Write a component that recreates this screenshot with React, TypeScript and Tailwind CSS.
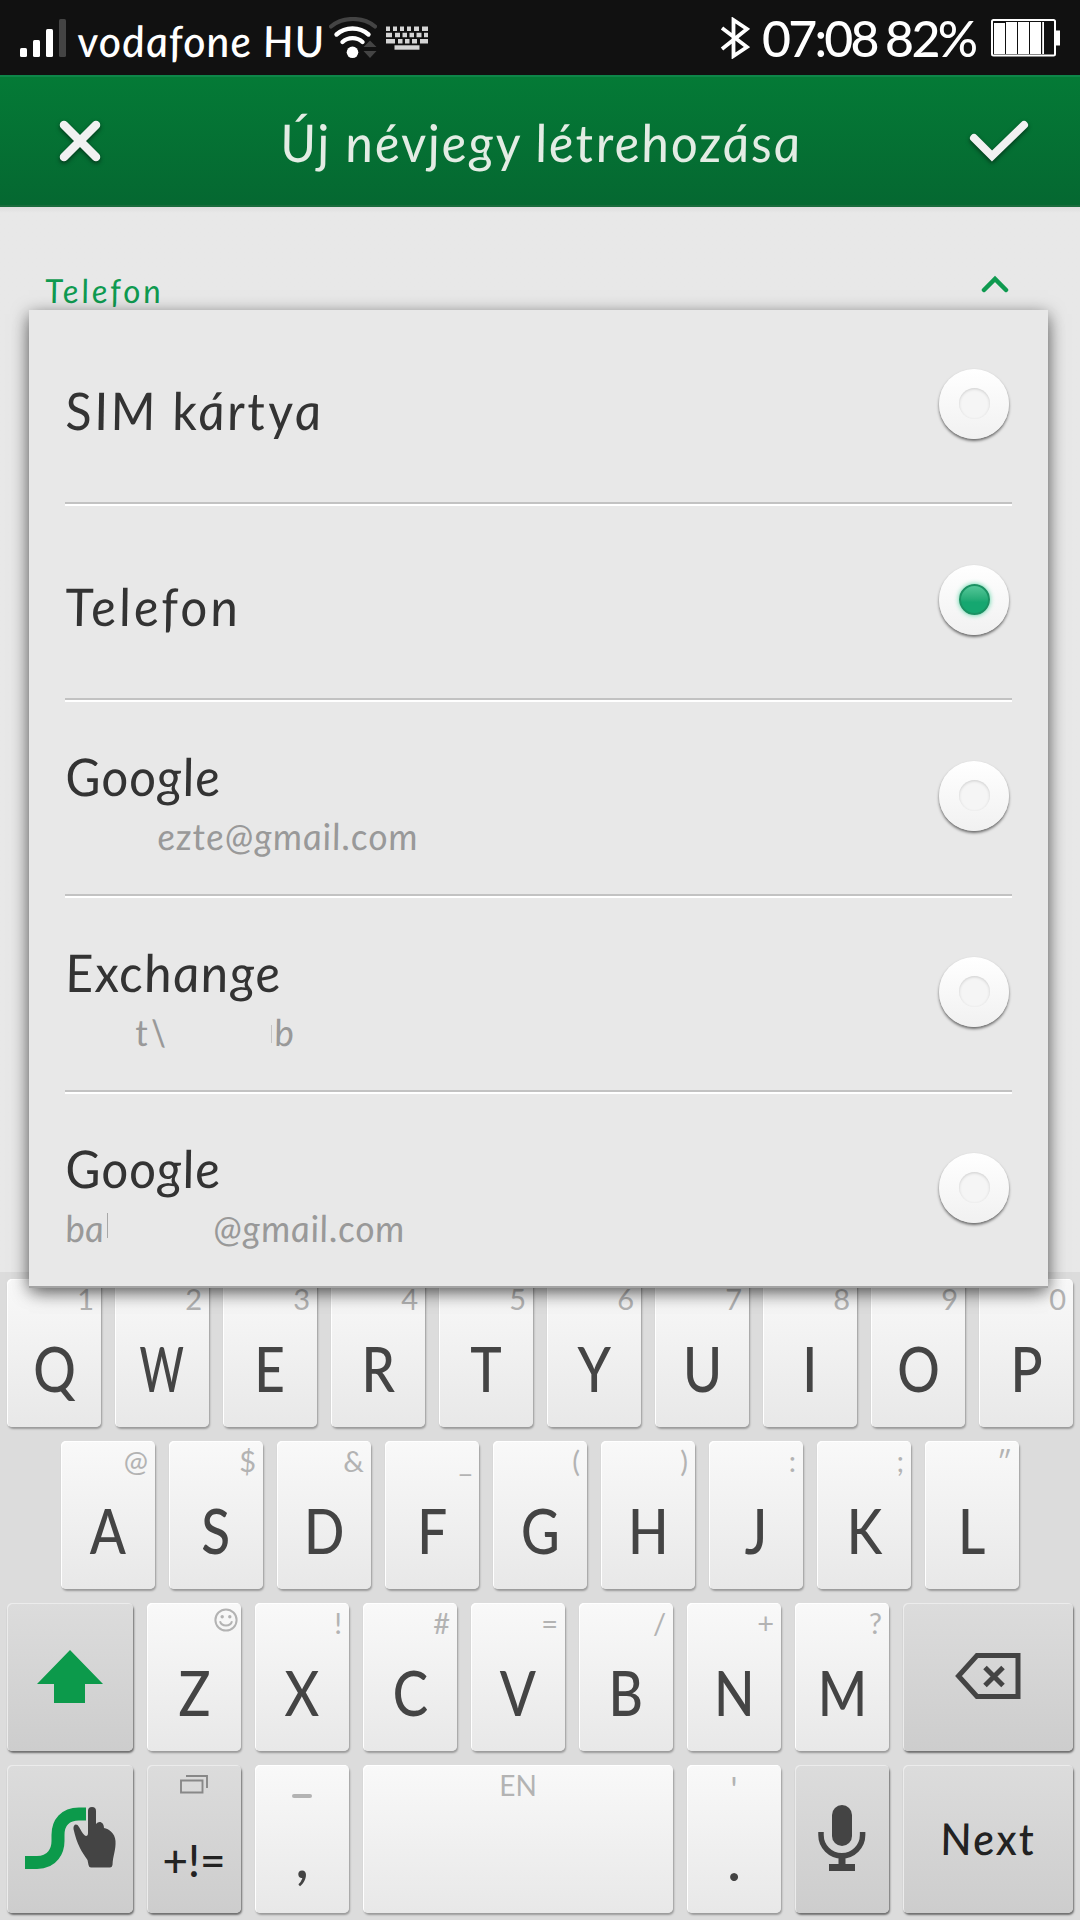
import type { ReactNode } from 'react'

type Account = {
  name: string
  tracking: string
  detail?: ReactNode
  selected?: boolean
}

type LetterKey = {
  letter: string
  hint: ReactNode
}

function Hand({ children, className = '' }: { children: ReactNode; className?: string }) {
  return <span className={`inline-block whitespace-pre italic skew-x-[6deg] ${className}`}>{children}</span>
}

const accounts: Account[] = [
  { name: 'SIM kártya', tracking: 'tracking-[2.4px]' },
  { name: 'Telefon', tracking: 'tracking-[3px]', selected: true },
  {
    name: 'Google',
    tracking: 'tracking-[0.8px]',
    detail: <Hand className="ml-[92px] tracking-[0.9px]">ezte@gmail.com</Hand>,
  },
  {
    name: 'Exchange',
    tracking: 'tracking-[1.3px]',
    detail: (
      <>
        <Hand className="ml-[70px] w-[32px] tracking-[3px]">t\</Hand>
        <span className="ml-[104px] mt-[14px] h-[18px] w-px bg-[#c4c4c4]" />
        <Hand className="ml-[2px]">b</Hand>
      </>
    ),
  },
  {
    name: 'Google',
    tracking: 'tracking-[0.8px]',
    detail: (
      <>
        <Hand className="w-[38px]">ba</Hand>
        <span className="ml-[4px] mt-[6px] h-[25px] w-px bg-[#a8a8a8]" />
        <Hand className="ml-[105px] tracking-[0.7px]">@gmail.com</Hand>
      </>
    ),
  },
]

const topRow: LetterKey[] = [
  { letter: 'Q', hint: '1' },
  { letter: 'W', hint: '2' },
  { letter: 'E', hint: '3' },
  { letter: 'R', hint: '4' },
  { letter: 'T', hint: '5' },
  { letter: 'Y', hint: '6' },
  { letter: 'U', hint: '7' },
  { letter: 'I', hint: '8' },
  { letter: 'O', hint: '9' },
  { letter: 'P', hint: '0' },
]

const homeRow: LetterKey[] = [
  { letter: 'A', hint: '@' },
  { letter: 'S', hint: '$' },
  { letter: 'D', hint: '&' },
  { letter: 'F', hint: '_' },
  { letter: 'G', hint: '(' },
  { letter: 'H', hint: ')' },
  { letter: 'J', hint: ':' },
  { letter: 'K', hint: ';' },
  { letter: 'L', hint: '″' },
]

const bottomRow: LetterKey[] = [
  { letter: 'Z', hint: <SmileIcon /> },
  { letter: 'X', hint: '!' },
  { letter: 'C', hint: '#' },
  { letter: 'V', hint: '=' },
  { letter: 'B', hint: '/' },
  { letter: 'N', hint: '+' },
  { letter: 'M', hint: '?' },
]

function SmileIcon() {
  return (
    <svg viewBox="0 0 24 24" className="-mr-[4px] -mt-[6px] h-6 w-6" fill="none" aria-hidden="true">
      <circle cx="12" cy="12" r="10.6" stroke="currentColor" strokeWidth="2" />
      <circle cx="8.2" cy="8.8" r="1.7" fill="currentColor" />
      <circle cx="15.8" cy="8.8" r="1.7" fill="currentColor" />
      <path d="M6 13.2C7.5 18.8 16.5 18.8 18 13.2" stroke="currentColor" strokeWidth="2" />
    </svg>
  )
}

function SignalIcon() {
  return (
    <svg viewBox="0 0 46 38" className="ml-5 h-[38px] w-[46px]" aria-hidden="true">
      <rect x="0" y="29" width="7" height="9" rx="1.5" fill="#fff" />
      <rect x="13" y="21" width="7" height="17" rx="1.5" fill="#fff" />
      <rect x="26" y="10" width="7" height="28" rx="1.5" fill="#fff" />
      <rect x="39" y="0" width="7" height="38" rx="1.5" fill="#444" />
    </svg>
  )
}

function WifiIcon() {
  return (
    <svg viewBox="0 0 48 42" className="h-[42px] w-12" fill="none" aria-hidden="true">
      <path d="M2 9.5C14 -0.5 34 -0.5 46 9.5" stroke="#444" strokeWidth="4.2" strokeLinecap="round" />
      <path d="M7.5 17.5C16.5 9.5 30.5 9.5 39.5 17.5" stroke="#fff" strokeWidth="4.4" strokeLinecap="round" />
      <path d="M13.5 25C19 19.8 28 19.8 33.5 25" stroke="#fff" strokeWidth="4.4" strokeLinecap="round" />
      <circle cx="23.5" cy="35.3" r="5.8" fill="#fff" />
      <path d="M34.5 30L41 23.5L47.5 30ZM34.5 34L41 41L47.5 34Z" fill="#444" />
    </svg>
  )
}

function KeyboardIcon() {
  return (
    <svg viewBox="0 0 44 24" className="ml-[8px] h-6 w-11" fill="none" stroke="#d4d4d4" strokeWidth="4.4" aria-hidden="true">
      <path d="M1 2.8H5M8 2.8H12M15 2.8H19M22 2.8H26M29 2.8H34M37 2.8H43" />
      <path d="M1 9H7M10 9H15M17.5 9H22M24.5 9H29M31.5 9H36.5M39 9H43" />
      <path d="M1 15.2H10M13 15.2H17.5M20 15.2H24.5M27 15.2H32M35 15.2H43" />
      <path d="M9.5 21.5H34.5" />
    </svg>
  )
}

function BluetoothIcon() {
  return (
    <svg viewBox="0 0 30 42" className="h-[42px] w-[30px]" fill="none" aria-hidden="true">
      <path d="M2 11L27 30L13.5 39V3L27 12L2 32" stroke="#fff" strokeWidth="3.8" />
    </svg>
  )
}

function BatteryIcon() {
  return (
    <svg viewBox="0 0 70 38" className="ml-[15px] mr-[19px] h-[38px] w-[70px]" aria-hidden="true">
      <rect x="1" y="1" width="63" height="35.5" rx="1.5" fill="none" stroke="#fff" strokeWidth="2" />
      <path d="M65 11.5H69V26.5H65Z" fill="#fff" />
      <path d="M3 4H14V35H3ZM15 3H26V35H15ZM27 3H38V35H27ZM39 3H50V35H39ZM51.2 3H53V35H51.2Z" fill="#fff" />
    </svg>
  )
}

function StatusBar() {
  return (
    <div className="flex h-[75px] items-center justify-between bg-[#111] text-white">
      <div className="flex items-center">
        <SignalIcon />
        <Hand className="ml-[11px] mt-[5px] w-[252px] text-[43px] font-medium leading-none tracking-[1px]">vodafone HU</Hand>
        <WifiIcon />
        <KeyboardIcon />
      </div>
      <div className="flex items-center">
        <BluetoothIcon />
        <span className="ml-[12px] w-[112px] text-[50px] font-medium leading-none tracking-[-2.8px]">07:08</span>
        <span className="ml-[11px] w-[91px] text-[50px] font-medium leading-none tracking-[-2.6px]">82%</span>
        <BatteryIcon />
      </div>
    </div>
  )
}

function Header() {
  return (
    <header className="flex h-[132px] items-center justify-between border-t-2 border-b-2 border-t-[#0e8649] border-b-[#1a6b3c] bg-linear-to-b from-[#047a36] to-[#056831]">
      <svg viewBox="0 0 44 44" className="ml-[58px] h-11 w-11 drop-shadow-[0_2px_2px_rgba(0,0,0,0.5)]" fill="none" aria-hidden="true">
        <path d="M6 6L38 38M38 6L6 38" stroke="#f1f1f1" strokeWidth="8.5" strokeLinecap="round" />
      </svg>
      <h1 className="ml-[10px] mt-[1px] text-[52px] leading-none text-[#e3ece4]">
        <Hand className="tracking-[1.9px]">Új névjegy létrehozása</Hand>
      </h1>
      <svg viewBox="0 0 60 44" className="mr-[51px] h-11 w-[60px] drop-shadow-[0_2px_2px_rgba(0,0,0,0.5)]" fill="none" aria-hidden="true">
        <path d="M5 19L23 37L55 6" stroke="#f1f1f1" strokeWidth="8" strokeLinecap="round" />
      </svg>
    </header>
  )
}

function Radio({ selected }: { selected?: boolean }) {
  return (
    <span className="flex h-[70px] w-[70px] items-center justify-center rounded-full bg-linear-to-b from-white to-[#f1f1f1] shadow-[0_2px_3px_rgba(0,0,0,0.55)]">
      {selected ? (
        <span className="-mt-[1px] h-[31px] w-[31px] rounded-full border-2 border-[#1b9263] bg-linear-to-b from-[#52c799] to-[#15a770] to-60% shadow-[0_0_5px_#4fd3a0]" />
      ) : (
        <span className="-mt-[1px] h-[31px] w-[31px] rounded-full bg-[#f5f5f5] shadow-[inset_0_1px_3px_rgba(0,0,0,0.16)]" />
      )}
    </span>
  )
}

function AccountMenu() {
  return (
    <ul className="absolute left-[29px] top-[310px] h-[976px] w-[1019px] bg-[#e8e8e8] pl-9 pr-9 shadow-[0_2px_0_#a3a3a3,0_4px_16px_rgba(0,0,0,0.5),0_10px_18px_-4px_rgba(0,0,0,0.35)]">
      {accounts.map((account, index) => (
        <li
          key={index}
          className="flex h-[196px] items-center justify-between border-b-2 border-white pb-[2px] shadow-[inset_0_-2px_0_#c2c2c2] last:border-transparent last:shadow-none"
        >
          <div className={account.detail ? 'flex flex-col pt-[5px]' : 'flex flex-col pt-[8px]'}>
            <Hand className={`self-start text-[52px] leading-[60px] text-[#333] ${account.tracking}`}>{account.name}</Hand>
            {account.detail && (
              <div className="flex h-[50px] items-start pt-[9px] text-[37px] leading-[42px] text-[#999]">{account.detail}</div>
            )}
          </div>
          <span className="mb-[5px] mr-[3px]">
            <Radio selected={account.selected} />
          </span>
        </li>
      ))}
    </ul>
  )
}

function Key({ children, dark, className = 'w-[94px]' }: { children?: ReactNode; dark?: boolean; className?: string }) {
  const tone = dark
    ? 'from-[#dcdcdc] to-[#cdcdcd] shadow-[1px_2px_2px_rgba(0,0,0,0.5),inset_1px_1px_0_#ececec]'
    : 'from-[#f9f9f9] to-[#e8e8e8] shadow-[1px_2px_2px_rgba(0,0,0,0.3),inset_1px_1px_0_#fff]'
  return (
    <div className={`flex h-[148px] shrink-0 flex-col items-center rounded-[5px] bg-linear-to-b ${tone} ${className}`}>{children}</div>
  )
}

function CharKey({ letter, hint }: LetterKey) {
  return (
    <Key>
      <span className="flex h-[39px] items-center self-end pr-[7px] text-[29px] leading-none text-[#b3b3b3]">{hint}</span>
      <span
        className={`flex h-[100px] items-center text-[61px] font-medium leading-none text-[#444] ${letter === 'W' ? 'scale-x-[0.7]' : 'scale-x-[0.87]'}`}
      >
        {letter}
      </span>
    </Key>
  )
}

function Keyboard() {
  return (
    <div className="flex h-[648px] flex-col gap-[14px] bg-[#dcdcdc] p-[7px] pr-[6px]">
      <div className="flex gap-[14px]">
        {topRow.map((item) => (
          <CharKey key={item.letter} {...item} />
        ))}
      </div>
      <div className="flex gap-[14px] pl-[54px]">
        {homeRow.map((item) => (
          <CharKey key={item.letter} {...item} />
        ))}
      </div>
      <div className="flex gap-[14px]">
        <Key dark className="w-[126px]">
          <svg viewBox="0 0 126 148" className="h-[148px] w-[126px]" aria-hidden="true">
            <path d="M63 47L96 81H78V100H47V81H30Z" fill="#0c9a4b" />
          </svg>
        </Key>
        {bottomRow.map((item) => (
          <CharKey key={item.letter} {...item} />
        ))}
        <Key dark className="w-[170px]">
          <svg viewBox="0 0 170 148" className="h-[148px] w-[170px]" fill="none" stroke="#444" strokeWidth="5" aria-hidden="true">
            <path d="M74 52.5H115V93.5H74L55.5 73Z" />
            <path d="M82 64.5L100 82.5M100 64.5L82 82.5" />
          </svg>
        </Key>
      </div>
      <div className="flex gap-[14px]">
        <Key dark className="w-[126px]">
          <svg viewBox="0 0 126 148" className="h-[148px] w-[126px]" fill="none" aria-hidden="true">
            <path d="M18 97.5H30C46 97.5 51 85 51 76V70C51 58 58 49 72 49H79" stroke="#0c9a4b" strokeWidth="13" />
            <path
              d="M81 46A4 4 0 0 1 89 46V59C92 55 97 57 97 63C102 64 108 68 108.5 76C109 85 106 90 105.5 100Q105 102.5 103 102.5H84Q82 102.5 81.5 100L80.5 95C75 87 70 80 66.5 64C66 59 70 58 72 62C74 65 76 70 79 71Q81 71 81 68Z"
              fill="#444"
              stroke="#d6d6d6"
              strokeWidth="2"
              paintOrder="stroke"
            />
          </svg>
        </Key>
        <Key dark>
          <svg viewBox="0 0 28 20" className="mt-[9px] h-5 w-7" fill="none" stroke="#888" strokeWidth="1.9" aria-hidden="true">
            <path d="M1 6.5H22.5V18.5H1Z" />
            <path d="M6 2H27V14" />
          </svg>
          <span className="mt-[40px] text-[44px] font-medium leading-[52px] text-[#222]">+!=</span>
        </Key>
        <Key>
          <span className="mt-[29px] h-[4px] w-5 rounded-sm bg-[#b3b3b3]" />
          <span className="mt-[27px] text-[60px] font-medium leading-[60px] text-[#444]">,</span>
        </Key>
        <Key className="w-[310px]">
          <span className="mt-[4px] text-[28px] leading-[32px] text-[#b3b3b3]">EN</span>
        </Key>
        <Key>
          <span className="mt-[4px] h-[32px] text-[34px] leading-[40px] text-[#b3b3b3]">'</span>
          <span className="mt-[27px] text-[60px] font-medium leading-[60px] text-[#444]">.</span>
        </Key>
        <Key dark>
          <svg viewBox="0 0 94 148" className="h-[148px] w-[94px]" fill="none" aria-hidden="true">
            <rect x="37" y="40" width="20" height="41" rx="10" fill="#444" />
            <path d="M26 67V70A20.8 20.8 0 0 0 67.6 70V67" stroke="#444" strokeWidth="5.5" />
            <path d="M43.5 91H50.5V99H60V106H34V99H43.5Z" fill="#444" />
          </svg>
        </Key>
        <Key dark className="w-[170px] justify-center">
          <Hand className="mb-[3px] text-[44px] font-medium leading-none tracking-[2px] text-[#222]">Next</Hand>
        </Key>
      </div>
    </div>
  )
}

export default function App() {
  return (
    <div className="relative flex h-[1920px] w-[1080px] flex-col overflow-hidden bg-[#e8e8e8] font-['Lato','Noto_Sans',sans-serif]">
      <StatusBar />
      <Header />
      <main className="flex flex-1 items-start justify-between bg-linear-to-b from-[#dedede] to-[#e8e8e8] to-[6px] pl-[45px] pr-[71px] pt-[64px]">
        <Hand className="text-[33px] leading-[38px] tracking-[2.9px] text-[#0f9a50]">Telefon</Hand>
        <svg viewBox="0 0 28 18" className="mt-[4px] h-[18px] w-7" fill="none" aria-hidden="true">
          <path d="M3 15L14 4L25 15" stroke="#0f9a50" strokeWidth="4.5" strokeLinecap="round" />
        </svg>
      </main>
      <Keyboard />
      <AccountMenu />
    </div>
  )
}
